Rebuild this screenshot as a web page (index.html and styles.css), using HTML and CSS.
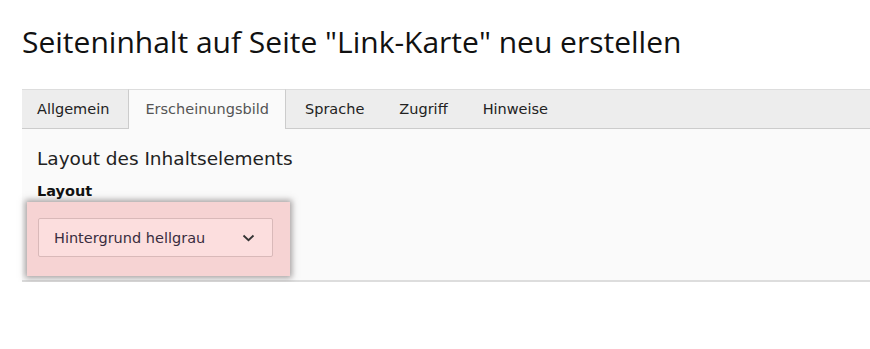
FILE: index.html
```
<!DOCTYPE html>
<html lang="de">
<head>
<meta charset="utf-8" />
<title>Seiteninhalt neu erstellen</title>
<link rel="stylesheet" href="styles.css">
</head>
<body>
<h1 class="title">Seiteninhalt auf Seite "Link-Karte" neu erstellen</h1>
<div class="tabs">
	<ul class="nav">
		<li>Allgemein</li>
		<li class="active">Erscheinungsbild</li>
		<li>Sprache</li>
		<li>Zugriff</li>
		<li>Hinweise</li>
	</ul>
	<div class="panel">
		<h2>Layout des Inhaltselements</h2>
		<label>Layout</label>
		<div class="mark">
			<div class="select">
				<span>Hintergrund hellgrau</span>
				<svg width="13" height="8" viewBox="0 0 13 8"><path d="M1.5 1.5 L6.5 6.2 L11.5 1.5" fill="none" stroke="#333" stroke-width="1.8"/></svg>
			</div>
		</div>
	</div>
</div>
</body>
</html>
```

FILE: styles.css
```
body {
	margin: 0;
	padding: 0;
	background: #fff;
	font-family: "DejaVu Sans", Verdana, sans-serif;
	color: #333;
}
.title {
	font-family: "Open Sans", sans-serif;
	font-weight: 400;
	font-size: 30px;
	line-height: 36px;
	color: #111;
	margin: 0 0 0 22px;
	padding-top: 24px;
}
.tabs {
	margin: 29px 0 0 22px;
}
.nav {
	list-style: none;
	margin: 0;
	padding: 0;
	display: flex;
	background: #ededed;
	border-top: 1px solid #ddd;
	border-bottom: 1px solid #ccc;
	height: 38px;
}
.nav li {
	font-size: 14.5px;
	line-height: 38px;
	padding: 0 16px 0 17px;
	margin-right: 2px;
	color: #222;
}
.nav li:first-child {
	padding: 0 17px 0 15px;
}
.nav li.active {
	background: #fafafa;
	color: #555;
	border-left: 1px solid #ccc;
	border-right: 1px solid #ccc;
	border-top: 1px solid #ddd;
	margin-top: -1px;
	margin-bottom: -1px;
	height: 39px;
	padding: 0 16px;
}
.panel {
	background: #fafafa;
	border-bottom: 2px solid #ddd;
	padding: 19px 0 4px 15px;
}
.panel h2 {
	font-weight: 400;
	font-size: 18.5px;
	line-height: 22px;
	margin: 0 0 12px;
	color: #222;
}
.panel label {
	display: block;
	font-weight: bold;
	font-size: 14.5px;
	line-height: 18px;
	color: #111;
}
.mark {
	width: 235px;
	margin: 2px 0 0 -10px;
	padding: 16px 17px 19px 11px;
	background: #f6d3d3;
	box-shadow: 0 0 6px 2px rgba(80, 70, 70, 0.5);
}
.select {
	height: 37px;
	border: 1px solid #d9b9b9;
	border-radius: 2px;
	background: #fcdede;
	display: flex;
	align-items: center;
	justify-content: space-between;
	padding: 0 17px 0 15px;
	font-size: 14.5px;
	color: #3a2d40;
}
```
